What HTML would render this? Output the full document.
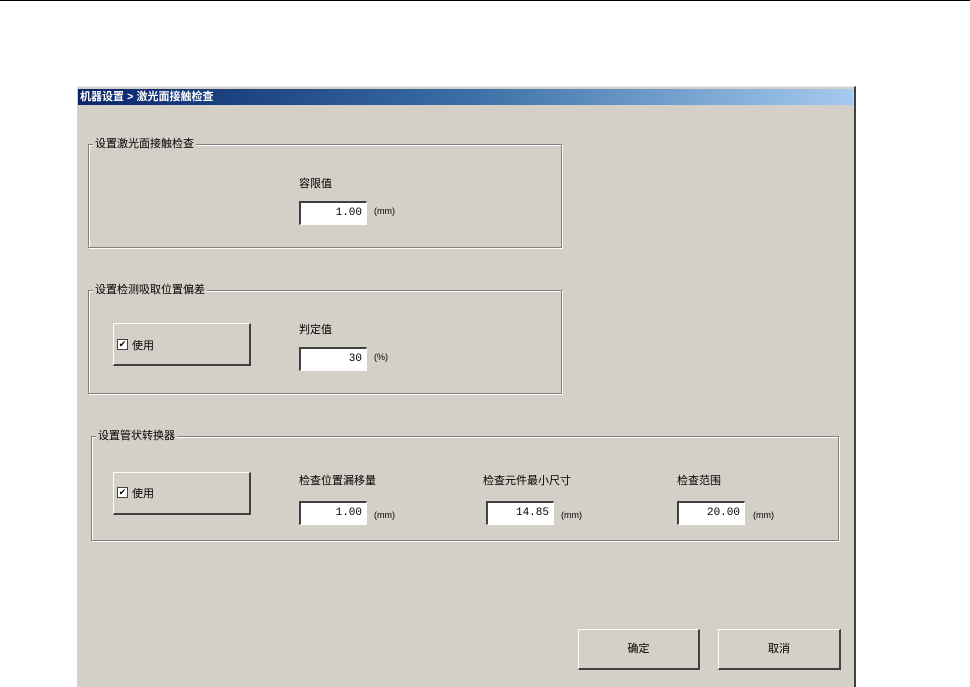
<!DOCTYPE html><html><head><meta charset="utf-8"><style>
body{margin:0;width:970px;height:682px;background:#fff;position:relative;overflow:hidden;font-family:"Liberation Sans","Noto Sans CJK SC",sans-serif;font-size:11px;color:#000}
.a{position:absolute}
#win{left:76px;top:86px;width:777px;height:600px;background:#d4d0c8;border-top:1px solid #eee;border-left:1px solid #fff;border-right:2px solid #404040}
#tb{left:78px;top:89px;width:775px;height:16px;background:linear-gradient(90deg,#0a246a,#3a6ea5 50%,#a6caf0);color:#fff;font-weight:bold;font-size:11px;line-height:16px;padding-left:2px;box-sizing:border-box}
.g{border:1px solid #808080;box-shadow:1px 1px 0 #fff inset,1px 1px 0 #fff}
.gt{background:#d4d0c8;padding:0 2px;line-height:12px}
.in{background:#fff;border-top:2px solid #404040;border-left:2px solid #404040;border-right:1px solid #fff;border-bottom:1px solid #fff;box-sizing:border-box;text-align:right;padding-right:4px;line-height:20px;font-family:"Liberation Mono",monospace;font-size:11px}
.bt{border-top:1px solid #fff;border-left:1px solid #fff;border-right:2px solid #404040;border-bottom:2px solid #404040;box-sizing:border-box;background:#d4d0c8}
.cb{width:9px;height:9px;border:1px solid #404040;background:#fff;font-size:9px;line-height:9px;text-align:center}
</style></head><body>
<div class="a" style="left:0;top:0;width:970px;height:1px;background:#000"></div>
<div id="win" class="a"></div>
<div id="tb" class="a">机器设置 &gt; 激光面接触检查</div>

<div class="a g" style="left:88px;top:144px;width:472px;height:102px"></div>
<div class="a gt" style="left:93px;top:138px">设置激光面接触检查</div>
<div class="a" style="left:299px;top:175px">容限值</div>
<div class="a in" style="left:299px;top:201px;width:68px;height:24px">1.00</div>
<div class="a" style="left:374px;top:206px;font-size:9px">(mm)</div>

<div class="a g" style="left:88px;top:290px;width:472px;height:102px"></div>
<div class="a gt" style="left:93px;top:284px">设置检测吸取位置偏差</div>
<div class="a bt" style="left:113px;top:323px;width:138px;height:43px"></div>
<div class="a cb" style="left:117px;top:339px">✔</div>
<div class="a" style="left:132px;top:337px">使用</div>
<div class="a" style="left:299px;top:321px">判定值</div>
<div class="a in" style="left:299px;top:347px;width:68px;height:24px">30</div>
<div class="a" style="left:374px;top:352px;font-size:9px">(%)</div>

<div class="a g" style="left:91px;top:436px;width:746px;height:103px"></div>
<div class="a gt" style="left:96px;top:430px">设置管状转换器</div>
<div class="a bt" style="left:113px;top:472px;width:138px;height:43px"></div>
<div class="a cb" style="left:117px;top:487px">✔</div>
<div class="a" style="left:132px;top:485px">使用</div>
<div class="a" style="left:299px;top:472px">检查位置漏移量</div>
<div class="a in" style="left:299px;top:501px;width:68px;height:24px">1.00</div>
<div class="a" style="left:374px;top:510px;font-size:9px">(mm)</div>
<div class="a" style="left:483px;top:472px">检查元件最小尺寸</div>
<div class="a in" style="left:486px;top:501px;width:68px;height:24px">14.85</div>
<div class="a" style="left:561px;top:510px;font-size:9px">(mm)</div>
<div class="a" style="left:677px;top:472px">检查范围</div>
<div class="a in" style="left:677px;top:501px;width:68px;height:24px">20.00</div>
<div class="a" style="left:753px;top:510px;font-size:9px">(mm)</div>

<div class="a bt" style="left:578px;top:629px;width:122px;height:41px;text-align:center;line-height:38px">确定</div>
<div class="a bt" style="left:718px;top:629px;width:123px;height:41px;text-align:center;line-height:38px">取消</div>
</body></html>
